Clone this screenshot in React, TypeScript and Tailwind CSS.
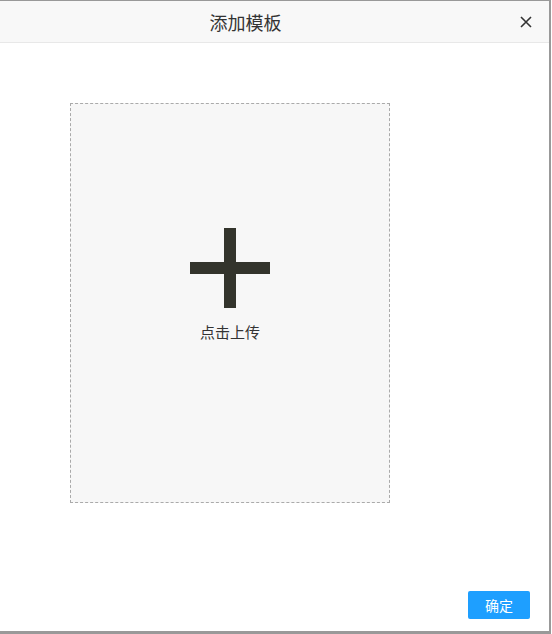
import React from "react";

const App = () => {
  return (
    <div
      className="flex w-[552px] h-[634px] bg-white"
      style={{ fontFamily: '"Noto Sans CJK SC", "Noto Sans", sans-serif' }}
    >
      <div className="flex flex-col w-[551px] h-full border-t border-r-2 border-b-[3px] border-[#999999] bg-white">
        <div className="flex items-center h-[42px] bg-[#f8f8f8] border-b border-[#e8e8e8] shrink-0">
          <div className="flex-1 text-center text-[18px] text-[#333333] leading-none pl-[1px]">
            添加模板
          </div>
          <div className="w-[59px] flex items-center pl-[30px]">
            <svg width="12" height="12" viewBox="0 0 12 12">
              <path d="M1 1 L11 11 M11 1 L1 11" stroke="#333333" strokeWidth="1.6" />
            </svg>
          </div>
        </div>
        <div className="flex-1 pt-[60px] pl-[70px]">
          <div className="flex flex-col items-center w-[320px] h-[400px] bg-[#f7f7f7] border border-dashed border-[#aaaaaa]">
            <svg className="mt-[124px]" width="80" height="80" viewBox="0 0 80 80">
              <rect x="34" y="0" width="12" height="80" fill="#33342c" />
              <rect x="0" y="34" width="80" height="12" fill="#33342c" />
            </svg>
            <p className="mt-[16px] text-[15px] leading-none text-[#333333]">点击上传</p>
          </div>
        </div>
        <div className="flex justify-end pr-[19px] pb-[12px]">
          <button className="w-[62px] h-[28px] rounded-[2px] bg-[#1e9fff] text-white text-[14px] leading-none">
            确定
          </button>
        </div>
      </div>
    </div>
  );
};

export default App;
